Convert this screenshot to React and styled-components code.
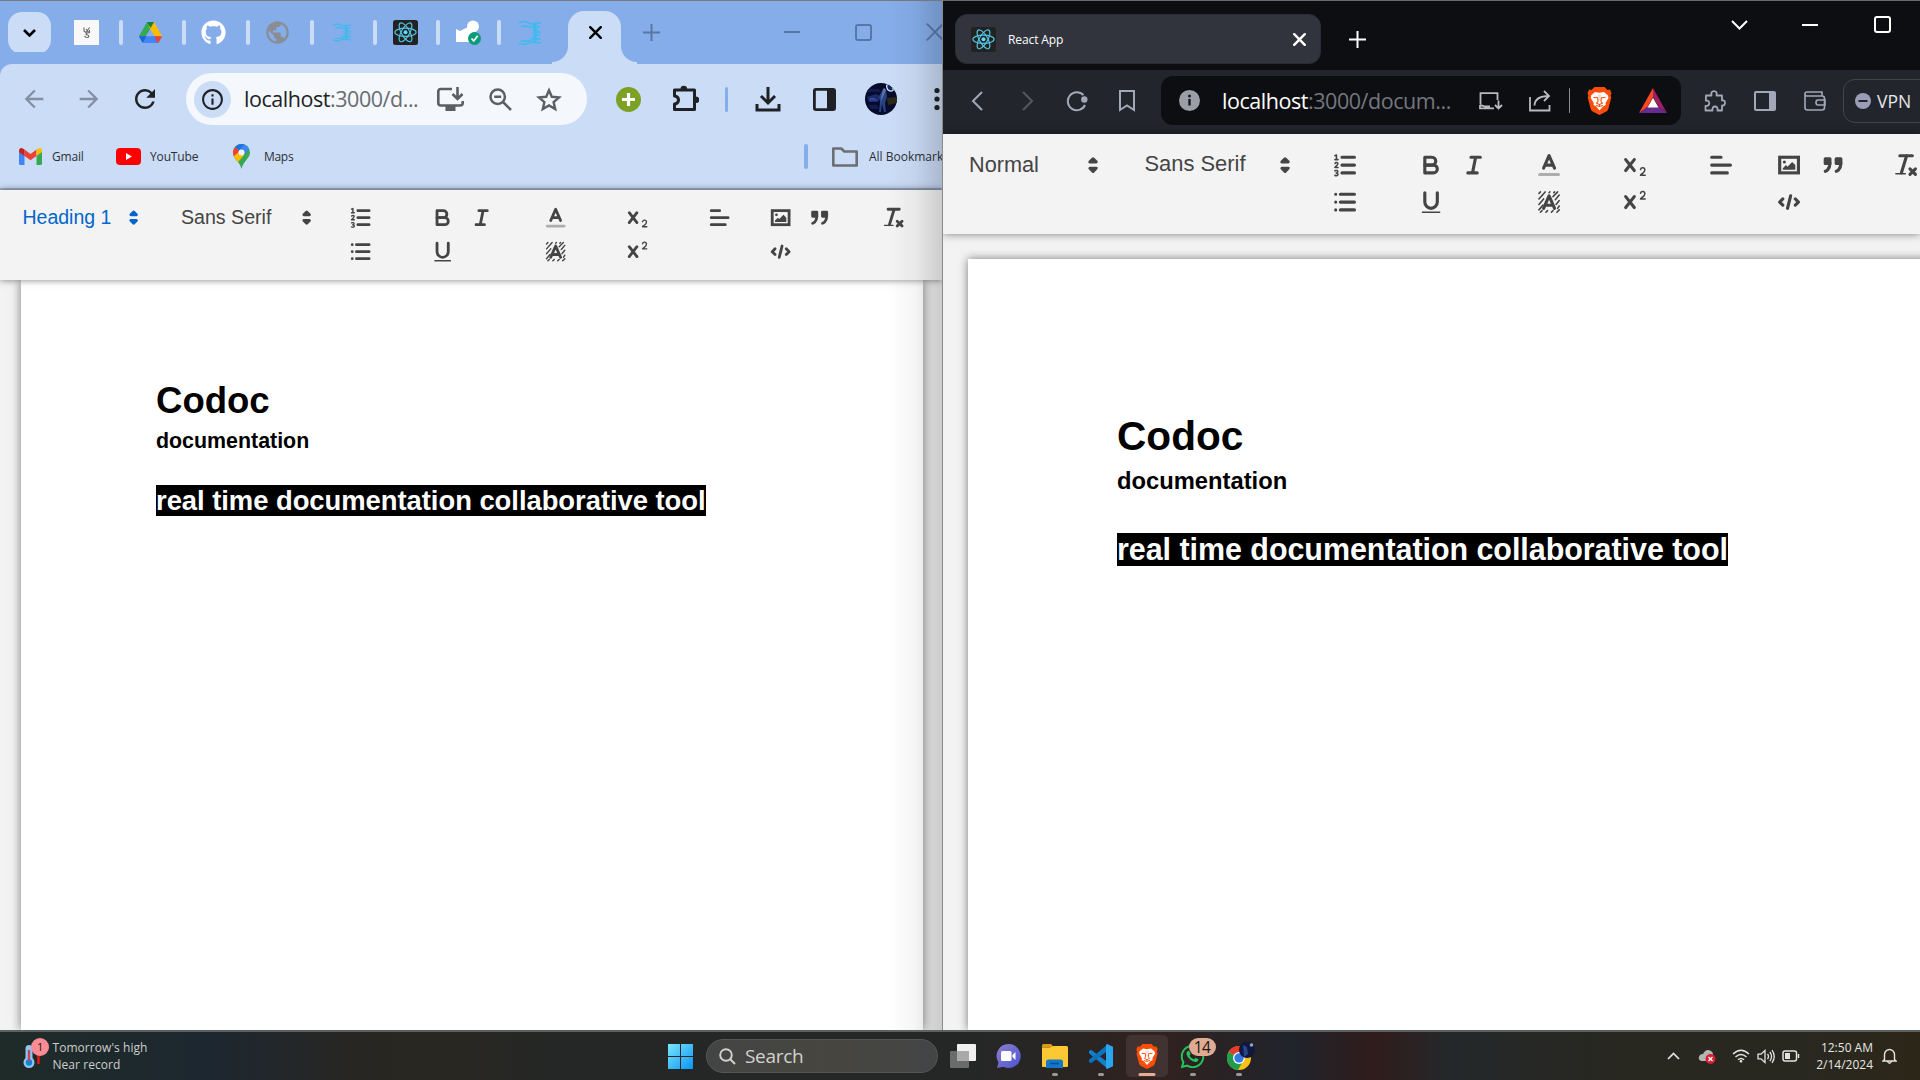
import React from "react";
import styled, { createGlobalStyle, css } from "styled-components";
import { FaGithub, FaWhatsapp } from "react-icons/fa";
import {
  MdArrowBack, MdArrowForward, MdRefresh, MdInfoOutline, MdPublic,
} from "react-icons/md";

const Global = createGlobalStyle`
  * { box-sizing: border-box; }
  body { margin: 0; overflow: hidden; background: #f3f3f3; }
  svg { display: block; flex: none; }
`;

const uiFont = `"Open Sans", "Noto Sans", sans-serif`;
const docFont = `"Liberation Sans", Arial, sans-serif`;

const Screen = styled.div`
  width: 1920px;
  height: 1080px;
  display: grid;
  grid-template: 1030px 50px / 943px 977px;
  overflow: hidden;
  font-family: ${uiFont};
`;

/* ---------- shared parts ---------- */
const Bar = styled.div`
  display: flex;
  align-items: ${(p) => p.$align || "center"};
  flex: none;
  height: ${(p) => p.$h}px;
`;
const Slot = styled.div`
  flex: none;
  display: flex;
  align-items: center;
  justify-content: center;
  width: ${(p) => p.$w}px;
  margin-left: ${(p) => p.$gap || 0}px;
  margin-top: ${(p) => p.$drop || 0}px;
  color: ${(p) => p.$color || "inherit"};
`;
const Divider = styled.span`
  flex: none;
  width: ${(p) => p.$w || 4}px;
  height: 25px;
  border-radius: 2px;
  margin-left: ${(p) => p.$gap}px;
  background: ${(p) => p.$color};
`;

/* ---------- light browser ---------- */
const LightWindow = styled.section`
  position: relative;
  display: flex;
  flex-direction: column;
  overflow: hidden;
  background: #f3f3f3;
  border-top: 1px solid #75787d;
  border-right: 1px solid #8b8b8b;
`;
const EdgeShade = styled.div`
  position: absolute;
  z-index: 4;
  inset: 0 0 0 auto;
  width: 54px;
  pointer-events: none;
  background: linear-gradient(90deg, transparent, rgba(0, 0, 0, 0.04) 50%, rgba(0, 0, 0, 0.16));
`;
const LightTabs = styled(Bar)`
  background: #85ade9;
`;
const TabSearch = styled.div`
  flex: none;
  display: grid;
  place-items: center;
  width: 43px;
  height: 42px;
  margin-left: 8px;
  border-radius: 14px;
  background: #cbdcf6;
`;
const ActiveTab = styled.div`
  flex: none;
  position: relative;
  align-self: flex-end;
  display: grid;
  place-items: center;
  width: 53px;
  height: 53px;
  padding: 0 0 10px 2px;
  margin-left: 26px;
  border-radius: 16px 16px 0 0;
  background: #cbdcf6;
  &::before, &::after {
    content: "";
    position: absolute;
    bottom: 0;
    width: 16px;
    height: 18px;
  }
  &::before { right: 100%; background: radial-gradient(circle at 0 0, transparent 15.5px, #cbdcf6 16.5px); }
  &::after { left: 100%; background: radial-gradient(circle at 100% 0, transparent 15.5px, #cbdcf6 16.5px); }
`;
const LightChrome = styled.div`
  flex: none;
  height: 126px;
  background: #cbdcf6;
  border-bottom: 2px solid #a3b2cb;
  border-top-left-radius: 12px;
  box-shadow: -12px -12px 0 0 #85ade9;
`;
const Omnibox = styled.div`
  flex: none;
  display: flex;
  align-items: center;
  width: 401px;
  height: 52px;
  margin-left: 26px;
  padding-left: 8px;
  border-radius: 26px;
  background: #f4f8fd;
  color: #5b5e63;
`;
const InfoChip = styled.div`
  flex: none;
  display: grid;
  place-items: center;
  width: 37px;
  height: 37px;
  border-radius: 50%;
  background: #cbdcf6;
  color: #1f2125;
`;
const Url = styled.div`
  flex: none;
  width: ${(p) => p.$w}px;
  margin-left: ${(p) => p.$gap}px;
  font-size: 21.5px;
  line-height: 30px;
  letter-spacing: ${(p) => p.$ls}px;
  white-space: nowrap;
  color: ${(p) => p.$dim};
  b { font-weight: 400; color: ${(p) => p.$host}; }
`;
const BookmarkText = styled.span`
  flex: none;
  width: ${(p) => p.$w}px;
  margin-left: ${(p) => p.$gap}px;
  font-size: 12px;
  line-height: 16px;
  letter-spacing: ${(p) => p.$ls || 0}px;
  color: #2c3035;
  white-space: nowrap;
`;

/* ---------- dark browser ---------- */
const DarkWindow = styled.section`
  display: flex;
  flex-direction: column;
  overflow: hidden;
  background: #f3f3f3;
  border-top: 1px solid #6b6d6c;
`;
const DarkTabs = styled(Bar)`
  background: #0d0e12;
  color: #fff;
`;
const DarkTab = styled.div`
  flex: none;
  display: flex;
  align-items: center;
  width: 366px;
  height: 50px;
  margin: 7px 0 0 12px;
  border-radius: 12px;
  background: #31343d;
  border: 1px solid #2a2d35;
  font-size: 12px;
`;
const TabTitle = styled.span`
  flex: none;
  width: 285px;
  margin-left: 12px;
  letter-spacing: -0.1px;
  color: #fff;
`;
const DarkTools = styled(Bar)`
  padding-bottom: 2px;
  background: #23252c;
  color: #a2a8b8;
`;
const DarkOmnibox = styled.div`
  flex: none;
  display: flex;
  align-items: center;
  width: 520px;
  height: 49px;
  margin: -1px 0 0 26px;
  border-radius: 12px;
  background: #0d0e12;
  color: #b9bbc0;
`;
const VpnButton = styled.div`
  flex: none;
  display: flex;
  align-items: center;
  width: 110px;
  height: 44px;
  margin-left: 17px;
  padding-left: 11px;
  gap: 6px;
  border: 1px solid #41454f;
  border-radius: 12px;
  color: #e6e7ea;
  font-size: 17.5px;
`;

/* ---------- editor ---------- */
const EditorToolbar = styled.div`
  position: relative;
  z-index: 2;
  flex: none;
  display: flex;
  height: ${(p) => p.$h}px;
  padding-top: ${(p) => p.$pt}px;
  background: #f3f3f3;
  color: #444;
  box-shadow: 0 0 ${(p) => p.$blur}px rgba(0, 0, 0, 0.5);
`;
const Picker = styled.div`
  flex: none;
  display: flex;
  align-items: center;
  justify-content: space-between;
  width: ${(p) => p.$w}px;
  height: ${(p) => p.$row}px;
  margin-left: ${(p) => p.$gap}px;
  font: ${(p) => p.$size}px/1 ${docFont};
  white-space: nowrap;
  color: ${(p) => (p.$active ? "#06c" : "#444")};
`;
const PickerLabel = styled.span`
  padding-bottom: ${(p) => p.$lift || 0}px;
`;
const ToolGroup = styled.div`
  flex: none;
  display: grid;
  grid-template-columns: repeat(${(p) => p.$cols || 1}, ${(p) => p.$cell}px);
  grid-auto-rows: ${(p) => p.$row}px;
  place-items: center;
  align-content: start;
  margin-left: ${(p) => p.$gap}px;
`;
const PageArea = styled.div`
  flex: 1;
  min-height: 0;
  display: flex;
  padding: ${(p) => p.$pad};
`;
const Page = styled.article`
  flex: none;
  width: ${(p) => p.$w}px;
  padding: ${(p) => p.$pad};
  background: #fff;
  box-shadow: 0 0 ${(p) => p.$blur}px rgba(0, 0, 0, 0.5);
  font-family: ${docFont};
  color: #000;
`;
const heading = css`
  margin: 0;
  font-weight: 700;
  white-space: nowrap;
`;
const Title = styled.h1`
  ${heading}
  font-size: ${(p) => 26 * p.$s}px;
  line-height: ${(p) => p.$lh}px;
`;
const Subtitle = styled.h3`
  ${heading}
  font-size: ${(p) => 15.21 * p.$s}px;
  line-height: 1.42;
`;
const Marked = styled.h2`
  ${heading}
  display: flex;
  align-items: center;
  width: ${(p) => p.$w}px;
  height: ${(p) => p.$h}px;
  margin-top: ${(p) => p.$gap}px;
  font-size: ${(p) => 19.5 * p.$s}px;
  letter-spacing: -0.04px;
  background: #000;
  color: #fff;
`;

/* ---------- taskbar ---------- */
const Taskbar = styled.footer`
  grid-column: 1 / -1;
  display: flex;
  align-items: center;
  border-top: 2px solid #5d6160;
  background: linear-gradient(90deg, #1f2b28 0, #1d2730 210px, #282622 360px, #292722 450px, #242726 560px, #252726 980px, #2a2422 1090px, #32211e 1150px, #20242b 1290px, #301c1c 1375px, #24282a 1450px, #282720 1620px, #292820 1800px, #2c2618 1920px);
  color: #d6d6d4;
`;
const TaskText = styled.div`
  flex: none;
  width: ${(p) => p.$w}px;
  margin-left: ${(p) => p.$gap}px;
  font-size: 12px;
  line-height: 17px;
  letter-spacing: ${(p) => p.$ls || 0}px;
  text-align: ${(p) => p.$align || "left"};
  white-space: nowrap;
  color: ${(p) => p.$color || "#cdcecc"};
`;
const SearchBox = styled.div`
  flex: none;
  display: flex;
  align-items: center;
  width: 232px;
  height: 34px;
  margin-left: 13px;
  padding-left: 12px;
  gap: 9px;
  border-radius: 17px;
  background: linear-gradient(90deg, #434545, #47463f 50%, #434446);
  border: 1px solid #555755;
  font-size: 19px;
  letter-spacing: -0.3px;
  color: #d2d2d0;
`;
const AppButton = styled.div`
  position: relative;
  flex: none;
  display: grid;
  place-items: center;
  width: 42px;
  height: 42px;
  margin-left: ${(p) => p.$gap || 4}px;
  border-radius: 5px;
  background: ${(p) => (p.$active ? "rgba(255,255,255,.08)" : "transparent")};
  &::after {
    content: "";
    position: absolute;
    bottom: 1px;
    left: 50%;
    transform: translateX(-50%);
    height: 3px;
    border-radius: 2px;
    width: ${(p) => (p.$active ? 17 : p.$open ? 6 : 0)}px;
    background: ${(p) => (p.$active ? "#e5ad96" : "#9a9a98")};
  }
`;
const Badge = styled.span`
  position: absolute;
  z-index: 1;
  left: ${(p) => p.$x}px;
  top: ${(p) => p.$y}px;
  min-width: ${(p) => p.$w}px;
  height: 18px;
  border-radius: 9px;
  background: ${(p) => p.$bg};
  color: #1c1512;
  font-size: ${(p) => p.$size}px;
  line-height: 18px;
  letter-spacing: -0.5px;
  text-align: center;
`;
const Weather = styled.div`
  position: relative;
  flex: none;
  width: 30px;
  margin-left: 20px;
`;

/* ---------- drawings ---------- */
const Ico = ({ w, h, vb, children, sw = 2, fill = "none", ...rest }) => (
  <svg width={w} height={h || w} viewBox={vb || `0 0 ${w} ${h || w}`} fill={fill} stroke="currentColor" strokeWidth={sw} {...rest}>
    {children}
  </svg>
);
const Close = ({ size = 13, sw = 2.4 }) => (
  <Ico w={size} sw={sw} strokeLinecap="round"><path d={`M1.2 1.2L${size - 1.2} ${size - 1.2}M${size - 1.2} 1.2L1.2 ${size - 1.2}`} /></Ico>
);
const Plus = ({ sw = 2 }) => <Ico w={17} sw={sw}><path d="M8.5 0v17M0 8.5h17" /></Ico>;
const Dash = () => <Ico w={16} h={16}><path d="M0 8h16" /></Ico>;
const Square = () => <Ico w={17}><rect x="1" y="1" width="15" height="15" rx="2" /></Ico>;
const InstallIcon = () => (
  <Ico w={27} h={24} sw={2.6}>
    <path d="M15 2H4Q1.300 2 1.300 4.500v11.500Q1.300 18.500 4 18.500h19q2.700 0 2.700-2.500v-2" />
    <path d="M20.500 0v11M15.500 7l5 5 5-5" />
    <path d="M8.500 19h10v5h-10z" fill="currentColor" stroke="none" />
  </Ico>
);
const ZoomOutIcon = () => (
  <Ico w={23} h={23} sw={2.5}><circle cx="8.700" cy="8.700" r="7.200" /><path d="M14 14l8 8M5.200 8.700h7" /></Ico>
);
const StarIcon = () => (
  <Ico w={26} h={25} sw={2.4}><path d="M13 3.200l2.800 6.600 7.200.6-5.400 4.700 1.600 7-6.200-3.700-6.200 3.700 1.600-7L3 10.400l7.200-.6z" /></Ico>
);
const ReactLogo = () => (
  <svg width="25" height="25" viewBox="0 0 25 25" fill="none" stroke="#53c1de" strokeWidth="1.2">
    <rect width="25" height="25" rx="2.5" fill="#222" stroke="none" />
    {[0, 60, 120].map((a) => <ellipse key={a} cx="12.5" cy="12.3" rx="10.6" ry="4.1" transform={`rotate(${a} 12.5 12.3)`} />)}
    <circle cx="12.5" cy="12.3" r="2" fill="#61dafb" stroke="none" />
  </svg>
);
const Drive = () => (
  <svg width="23" height="21" viewBox="0 0 23 21">
    <path d="M8 0l3.700 6L4 18.500 0 14.200z" fill="#34a853" />
    <path d="M15 0l8 14.200h-7.400L9.800 4.500 11.500 2z" fill="#fbbc04" />
    <path d="M8 0h7l-3.400 6z" fill="#188038" />
    <path d="M0 14.200h17L19 21H5q-1.500 0-2-1z" fill="#4285f4" />
    <path d="M15.600 14.200H23L20 20q-.6 1-1.400.9z" fill="#ea4335" />
    <path d="M0 14.200h7.400L4 20.500q-.8-.2-1.200-1z" fill="#1967d2" />
  </svg>
);
const Sketch = () => (
  <svg width="25" height="25" viewBox="0 0 25 25" fill="none" stroke="#666" strokeWidth="1.100">
    <rect width="25" height="25" fill="#f8f8f8" stroke="none" />
    <path d="M10 7.500v3.500l2 1.500 3.500-5M12 9l2.500 3M15.500 10v2.500l-2.500.5q-2 1.500.5 2 2.500.8.500 2.500l-2-.2-1.500-1.300" />
  </svg>
);
const Helix = ({ big }) => (
  <svg width={big ? 24 : 20} height={big ? 26 : 19} viewBox="0 0 24 26" preserveAspectRatio="none" fill="none" stroke="#35bdf0" strokeWidth={big ? 1.4 : 1.6} opacity={big ? 0.95 : 0.85}>
    <path d="M1 3C7-1 10 3 13 4l10-1M4 6c5 0 8 1 10 1h8M15 10h5M16 12h7M15 15h7M13 18c3 1 5 1 10 1M1 23c6 4 9-1 13-1l9 1M3 21c6 1 8-1 11-1" />
    <path d="M17 4v18" strokeWidth="3" /><path d="M12 10h.5M13 13h.5M11 16h.5" strokeWidth="2" />
  </svg>
);
const KeyCheck = () => (
  <svg width="25" height="25" viewBox="0 0 25 25">
    <circle cx="17" cy="6.500" r="6" fill="#fff" />
    <path d="M0 9l4 2 8-4 5 6-2 9H0z" fill="#fff" />
    <circle cx="18.500" cy="18.500" r="6.500" fill="#0b9b79" />
    <path d="M15.500 18.500l2.200 2.500 4-5.200" fill="none" stroke="#fff" strokeWidth="1.700" />
  </svg>
);
const Gmail = () => (
  <svg width="23" height="17" viewBox="0 0 23 17">
    <path d="M0 3l5.500 4v10H1.500Q0 17 0 15.500z" fill="#4285f4" />
    <path d="M17.500 7L23 3v12.500q0 1.500-1.500 1.500h-4z" fill="#34a853" />
    <path d="M5.500 1.500L11.500 6l6-4.500V8l-6 4.300L5.500 8z" fill="#ea4335" />
    <path d="M0 3Q0 0 2.400 0q1.300 0 3.100 1.500V8L0 4z" fill="#c5221f" />
    <path d="M23 3q0-3-2.400-3-1.300 0-3.100 1.500V8L23 4z" fill="#fbbc04" />
  </svg>
);
const YouTube = () => (
  <svg width="25" height="17" viewBox="0 0 25 17"><rect width="25" height="17" rx="4" fill="#f00" /><path d="M10 5l6 3.500-6 3.500z" fill="#fff" /></svg>
);
const Maps = () => (
  <svg width="17" height="25" viewBox="0 0 17 25">
    <path d="M8.500 0A8.500 8.500 0 0 1 17 8.500c0 6-6.500 8-8.500 16.500C6.500 16.500 0 14.500 0 8.500A8.500 8.500 0 0 1 8.500 0z" fill="#34a853" />
    <path d="M2 3Q4.500 0 8.500 0q1.500 0 3 .6L6 7.500z" fill="#1a73e8" />
    <path d="M11.500.6Q15 2 16.300 5.200L4.200 17.200Q1.700 15 .8 12z" fill="#4285f4" />
    <path d="M.8 12L6 6l5 5.200-6.200 7Q2 15.500.8 12z" fill="#fbbc04" />
    <path d="M2 3l5 4-6.200 5Q0 10.500 0 8.500 0 5 2 3z" fill="#ea4335" />
    <circle cx="8.500" cy="8.500" r="3" fill="#f1f3f4" />
  </svg>
);
const Avatar = () => (
  <svg width="32" height="32" viewBox="0 0 32 32">
    <defs><clipPath id="av"><circle cx="16" cy="16" r="16" /></clipPath></defs>
    <g clipPath="url(#av)">
      <rect width="32" height="32" fill="#070b2b" />
      <path d="M2 14l9-3 5 3-3 5H4z" fill="#1b2a6b" />
      <path d="M0 6h14l2 3H2zM3 22h9l2 4H6z" fill="#101a4e" />
      <path d="M22 15l10-1v6l-9 2z" fill="#2d2817" />
      <path d="M17 8l2-3 2 2 1 7-2 6 1 9h-2l-2-8-1 8h-2l1-10-1-6z" fill="#27407f" />
      <path d="M18 6l1.500-1L21 7l-2 5-3 6-1 7 1-10z" fill="#6d86bd" opacity=".7" />
      <path d="M21.500 3q1-2.500 4-1.500 3 2 2.500 6-3 1.500-5.500-1z" fill="#0d2a66" stroke="#dfeafb" strokeWidth="1.200" />
      <path d="M4 17h8M5 15.500h5" stroke="#4660b0" strokeWidth=".8" />
    </g>
  </svg>
);
const BraveLogo = ({ w, h }) => (
  <svg width={w} height={h} viewBox="0 0 24 28">
    <path d="M7 0h10l3 3 2.300-.4L24 6l-.9 2.500.7 2-3 11.500q-.5 1.500-2 2.500L12 28l-6.800-3.500q-1.500-1-2-2.500L.2 10.500l.7-2L0 6l1.700-3.400L4 3z" fill="#fb4d0a" />
    <path d="M7.500 5l4.500.8L16.500 5 20.500 8.500l.5 2.500-3 5 .3 2-2.500 1.300L12 23.500l-3.500-4.200L6 18l.3-2-3-5L3.500 8.500z" fill="#fff" />
    <path d="M6 10.500l4.200.3.300 3.700-1.500 1.500 3 1.600 3-1.600-1.500-1.500.3-3.700 4.200-.3M12 17.600v1.800M8.500 18.500l3.500 1 3.500-1" fill="none" stroke="#fb4d0a" strokeWidth="1.050" />
    <path d="M9.500 7.500h5l-1.500 3v3h-2v-3z" fill="#fb4d0a" opacity=".18" />
  </svg>
);
const BatLogo = () => (
  <svg width="28" height="25" viewBox="0 0 28 25">
    <path d="M14 0v9L8.500 19 0 25z" fill="#ff4724" />
    <path d="M14 0l14 25-8.500-6L14 9z" fill="#9e1f63" />
    <path d="M0 25l8.500-6h11L28 25z" fill="#662d91" />
    <path d="M14 9.800L19.500 19.500h-11z" fill="#fff" />
  </svg>
);

/* toolbar glyphs on an 18-unit grid */
const G = ({ s, children }) => (
  <svg width={18 * s} height={18 * s} viewBox="0 0 18 18" fill="none" stroke="currentColor" strokeWidth="2" strokeLinecap="round" strokeLinejoin="round">
    {children}
  </svg>
);
const f = { fill: "currentColor", stroke: "none" };
const Caret = ({ s }) => <G s={s}><polygon points="7 11 9 13 11 11" fill="currentColor" /><polygon points="7 7 9 5 11 7" fill="currentColor" /></G>;
const subTwo = "M15.500,15H13.861a3.858,3.858,0,0,0,1.914-2.975,1.800,1.800,0,0,0-1.600-1.751A1.921,1.921,0,0,0,12.021,11.700a.50013.50013,0,1,0,.957.291h0a.914.914,0,0,1,1.053-.725.81.81,0,0,1,.744.762c0,1.076-1.16971,1.86982-1.93971,2.43082A1.45639,1.45639,0,0,0,12,15.500a.5.5,0,0,0,.5.500h3A.5.5,0,0,0,15.500,15Z";
const glyphs = {
  ordered: <>
    <path d="M7 4h8M7 9h8M7 14h8" />
    <path strokeWidth="1" d="M2.500 5.500h2M3.500 5.500v-3l-1 .5M2.500 10.500h2M2.600 7.900q.9-.9 1.700-.2.400.8-1.800 2.700M2.500 12.700q1.900-.6 1.800.6-.1.800-1 .8 1.200.1 1.200.9-.2 1.100-2 .6" />
  </>,
  bullet: <path d="M6 4h9M6 9h9M6 14h9M3 4h0M3 9h0M3 14h0" />,
  bold: <><path d="M5,4H9.500A2.500,2.500,0,0,1,12,6.500v0A2.500,2.500,0,0,1,9.500,9H5A0,0,0,0,1,5,9V4A0,0,0,0,1,5,4Z" /><path d="M5,9h5.500A2.500,2.500,0,0,1,13,11.500v0A2.500,2.500,0,0,1,10.500,14H5a0,0,0,0,1,0,0V9A0,0,0,0,1,5,9Z" /></>,
  italic: <path d="M7 4h6M5 14h6M8 14l2-10" />,
  underline: <><path d="M5,3V9a4.012,4.012,0,0,0,4,4H9a4.012,4.012,0,0,0,4-4V3" /><rect {...f} height="1" rx=".5" width="12" x="3" y="15" /></>,
  color: <><path d="M3 15h12" opacity=".4" /><path d="M5.500 11L9 3l3.500 8M11.630 9H6.380" /></>,
  background: <>
    <path strokeWidth="1" d="M2.500 3.500l1-1M2.500 7l4-4.500M2.500 10.500l3-3.500M2.500 14l2.500-3M9 3l.5-.5M12 3l.5-.5M11.500 5.500l3-3M13 7.500l2.500-3M13.500 10.500l2-2.500M14.500 13l1-1.500M3.500 15.500l1-1M7 15.500l1-1M10.500 15.500l1-1M14 15.500l1.500-1.500" />
    <path d="M5.500 13L9 5l3.500 8M11.630 11H6.380" />
  </>,
  sub: <><path {...f} d={subTwo} /><path d="M3 5.500l5.500 7M8.500 5.500L3 12.500" /></>,
  sup: <><path {...f} transform="translate(0 -8.500)" d={subTwo} /><path d="M3 5.500l5.500 7M8.500 5.500L3 12.500" /></>,
  align: <path d="M3 9h12M3 14h10M3 4h6" />,
  image: <><rect x="3" y="4" width="12" height="10" strokeLinejoin="miter" /><circle {...f} cx="6" cy="7" r="1" /><polyline {...f} points="5 12 5 11 7 9 8 10 11 7 13 9 13 12 5 12" /></>,
  quote: <><rect fill="currentColor" x="4" y="5" width="3" height="3" /><rect fill="currentColor" x="11" y="5" width="3" height="3" /><path fillRule="evenodd" d="M7,8c0,4.031-3,5-3,5M14,8c0,4.031-3,5-3,5" /></>,
  code: <path d="M5 7L3 9l2 2M13 7l2 2-2 2M10 5L8 13" />,
  clean: <><path d="M5 3h8M6 14L9.350 3M11.500 11.500l3.500 3.500M15 11.500L11.500 15" /><rect {...f} height="1" rx=".5" width="7" x="2" y="14" /></>,
};
const groups = [
  { id: "list", cols: 1, items: ["ordered", "bullet"] },
  { id: "style", cols: 2, items: ["bold", "italic", "underline"] },
  { id: "color", cols: 1, items: ["color", "background"] },
  { id: "script", cols: 1, items: ["sub", "sup"] },
  { id: "align", cols: 1, items: ["align"] },
  { id: "embed", cols: 2, items: ["image", "quote", "code"] },
  { id: "clean", cols: 1, items: ["clean"] },
];
const Tools = ({ s, row, cell, gaps }) =>
  groups.map((g, i) => (
    <ToolGroup key={g.id} $cols={g.cols} $row={row} $cell={cell} $gap={gaps[i]}>
      {g.items.map((k) => <G key={k} s={s}>{glyphs[k]}</G>)}
    </ToolGroup>
  ));

const LEFT = 1.40625;
const RIGHT = 1.5625;

function LightBrowser() {
  const sep = "#cbdcf6";
  return (
    <LightWindow>
      <EdgeShade />
      <LightTabs $h={63}>
        <TabSearch><Ico w={13} h={8} sw={2.6}><path d="M1 1l5.500 5.500L12 1" /></Ico></TabSearch>
        <Slot $w={25} $gap={23}><Sketch /></Slot>
        <Divider $gap={20} $color={sep} />
        <Slot $w={23} $gap={16}><Drive /></Slot>
        <Divider $gap={20} $color={sep} />
        <Slot $w={25} $gap={15} $color="#fff"><FaGithub size={25} /></Slot>
        <Divider $gap={20} $color={sep} />
        <Slot $w={27} $gap={14} $color="#8a8e94"><MdPublic size={27} /></Slot>
        <Divider $gap={19} $color={sep} />
        <Slot $w={22} $gap={17}><Helix /></Slot>
        <Divider $gap={20} $color={sep} />
        <Slot $w={25} $gap={16}><ReactLogo /></Slot>
        <Divider $gap={18} $color={sep} />
        <Slot $w={25} $gap={16}><KeyCheck /></Slot>
        <Divider $gap={16} $color={sep} />
        <Slot $w={24} $gap={17}><Helix big /></Slot>
        <ActiveTab><Close /></ActiveTab>
        <Slot $w={17} $gap={22} $color="#5a76a5"><Plus /></Slot>
        <Slot $w={16} $gap={124} $drop={-1} $color="#5a76a5"><Dash /></Slot>
        <Slot $w={17} $gap={55} $drop={-1} $color="#5a76a5"><Square /></Slot>
        <Slot $w={17} $gap={54} $drop={-1} $color="#5a76a5"><Close size={18} sw={1.8} /></Slot>
      </LightTabs>
      <LightChrome>
        <Bar $h={70}>
          <Slot $w={26} $gap={21} $color="#858fa3"><MdArrowBack size={28} /></Slot>
          <Slot $w={26} $gap={29} $color="#858fa3"><MdArrowForward size={28} /></Slot>
          <Slot $w={30} $gap={28} $color="#1f2125"><MdRefresh size={30} /></Slot>
          <Omnibox>
            <InfoChip><MdInfoOutline size={25} /></InfoChip>
            <Url $w={178} $gap={13} $ls={-0.45} $dim="#686b70" $host="#202226"><b>localhost</b>:3000/d...</Url>
            <Slot $w={28} $gap={14}><InstallIcon /></Slot>
            <Slot $w={28} $gap={22}><ZoomOutIcon /></Slot>
            <Slot $w={30} $gap={20}><StarIcon /></Slot>
          </Omnibox>
          <Slot $w={25} $gap={29}>
            <svg width="25" height="25" viewBox="0 0 25 25"><circle cx="12.500" cy="12.500" r="12.500" fill="#7ca125" /><path d="M12.500 6v13M6 12.500h13" stroke="#fff" strokeWidth="3.200" /></svg>
          </Slot>
          <Slot $w={27} $gap={31} $drop={-2} $color="#1f2125">
            <Ico w={27} h={27} sw={3} strokeLinejoin="round">
              <path d="M2.500 5h20v19.500h-20v-5.500q4-.5 4-4t-4-4z" />
              <path d="M8.500 4a3.300 3.300 0 0 1 6.600 0zM24 11.500a3.300 3.300 0 0 1 0 6.600z" fill="currentColor" stroke="none" />
            </Ico>
          </Slot>
          <Divider $gap={26} $w={3} $color="#85ade9" />
          <Slot $w={26} $gap={27} $color="#1f2125"><Ico w={26} sw={3}><path d="M13 1v15M6 10l7 7 7-7M2 18v6h22v-6" /></Ico></Slot>
          <Slot $w={23} $gap={32} $color="#1f2125"><Ico w={23} sw={2.800}><rect x="1.400" y="1.400" width="20.200" height="20.200" rx="1.500" /><path d="M14 2h7v19h-7z" fill="currentColor" stroke="none" /></Ico></Slot>
          <Slot $w={32} $gap={29}><Avatar /></Slot>
          <Slot $w={6} $gap={36.500} $color="#1f2125"><Ico w={6} h={24} fill="currentColor" sw={0}><circle cx="3" cy="3.500" r="2.600" /><circle cx="3" cy="12" r="2.600" /><circle cx="3" cy="20.500" r="2.600" /></Ico></Slot>
        </Bar>
        <Bar $h={45}>
          <Slot $w={23} $gap={19}><Gmail /></Slot>
          <BookmarkText $w={34} $gap={10} $ls={-0.2}>Gmail</BookmarkText>
          <Slot $w={25} $gap={30}><YouTube /></Slot>
          <BookmarkText $w={50} $gap={9} $ls={-0.15}>YouTube</BookmarkText>
          <Slot $w={17} $gap={33}><Maps /></Slot>
          <BookmarkText $w={32} $gap={14} $ls={-0.3}>Maps</BookmarkText>
          <Divider $gap={508} $color="#85ade9" />
          <Slot $w={26} $gap={24} $color="#6b6e73"><Ico w={26} h={20} sw={2.600} strokeLinejoin="round"><path d="M1.300 1.500h8l3 3h12.400v14H1.300z" /></Ico></Slot>
          <BookmarkText $w={90} $gap={11}>All Bookmarks</BookmarkText>
        </Bar>
      </LightChrome>
      <EditorToolbar $h={90} $pt={11} $blur={7}>
        <Picker $active $w={123.500} $row={34} $gap={22.500} $size={19.500}>Heading 1<Caret s={LEFT} /></Picker>
        <Picker $w={138} $row={34} $gap={35} $size={19.600}>Sans Serif<Caret s={LEFT} /></Picker>
        <Tools s={LEFT} row={34} cell={39.400} gaps={[22.300, 41.900, 35, 42.200, 42.600, 21.700, 34.400]} />
      </EditorToolbar>
      <PageArea $pad="0 0 0 21px">
        <Page $w={902} $pad="95px 0 0 135px" $blur={10}>
          <Title $s={LEFT} $lh={51}>Codoc</Title>
          <Subtitle $s={LEFT}>documentation</Subtitle>
          <Marked $s={LEFT} $w={550} $h={31} $gap={29}>real time documentation collaborative tool</Marked>
        </Page>
      </PageArea>
    </LightWindow>
  );
}

function DarkBrowser() {
  return (
    <DarkWindow>
      <DarkTabs $h={69}>
        <DarkTab>
          <Slot $w={25} $gap={15}><ReactLogo /></Slot>
          <TabTitle>React App</TabTitle>
          <Close />
        </DarkTab>
        <Slot $w={17} $gap={28} $drop={7}><Plus /></Slot>
        <Slot $w={17} $gap={365} $drop={-22}><Ico w={17} h={10}><path d="M1 1l7.500 7.500L16 1" /></Ico></Slot>
        <Slot $w={16} $gap={54} $drop={-22}><Dash /></Slot>
        <Slot $w={17} $gap={56} $drop={-22}><Square /></Slot>
      </DarkTabs>
      <DarkTools $h={64}>
        <Slot $w={12} $gap={28}><Ico w={12} h={20}><path d="M11 1l-9 9 9 9" /></Ico></Slot>
        <Slot $w={12} $gap={39} $color="#545863"><Ico w={12} h={20}><path d="M1 1l9 9-9 9" /></Ico></Slot>
        <Slot $w={22} $gap={32}><Ico w={22} h={21}><path d="M17.500 4.200A9 9 0 1 0 19 14" /><circle cx="18.300" cy="8.500" r="3.200" fill="currentColor" stroke="none" /></Ico></Slot>
        <Slot $w={16} $gap={31}><Ico w={16} h={22}><path d="M1 1h14v19l-7-4.500L1 20z" /></Ico></Slot>
        <DarkOmnibox>
          <Slot $w={21} $gap={18}>
            <svg width="21" height="21" viewBox="0 0 21 21"><circle cx="10.500" cy="10.500" r="10.500" fill="#9b9ea6" /><path d="M10.500 9v6.500" stroke="#17191e" strokeWidth="2.400" /><circle cx="10.500" cy="6" r="1.500" fill="#17191e" /></svg>
          </Slot>
          <Url $w={233} $gap={22} $ls={-0.45} $dim="#74777e" $host="#fff"><b>localhost</b>:3000/docum...</Url>
          <Slot $w={24} $gap={24}><Ico w={24} h={18} sw={1.800}><path d="M1.500 12V1.200h17V8M1 12.800l5 1.700h5M1 12.800v3.500h14M19.500 8.500v7M16 13l3.500 3.500L23 13" /></Ico></Slot>
          <Slot $w={22} $gap={26}><Ico w={22} h={22} sw={1.800}><path d="M1 7v13.500h19.500V15M5.500 15.500Q6 6 20 6M15 1l5 5-5 5" /></Ico></Slot>
          <Divider $w={1} $gap={18} $color="#8a8c90" />
          <Slot $w={25} $gap={17}><BraveLogo w={25} h={28} /></Slot>
          <Slot $w={28} $gap={27}><BatLogo /></Slot>
        </DarkOmnibox>
        <Slot $w={22} $gap={23}>
          <Ico w={22} h={22} sw={1.800} strokeLinejoin="round"><path d="M2 5.500h5.500Q6.500 1.200 10 1.200T12.500 5.500H18v5q3-.8 3 2.300T18 15.500V20.500h-4.500q.5-4-2.500-4t-2.500 4H1.500V16q3.800 0 3.800-2.800T1.800 10.500z" /></Ico>
        </Slot>
        <Slot $w={22} $gap={28}><Ico w={22} h={20}><rect x="1" y="1" width="20" height="18" rx="1" /><path d="M15 1h6v18h-6z" fill="currentColor" stroke="none" /></Ico></Slot>
        <Slot $w={22} $gap={28}><Ico w={22} h={20} sw={1.600}><path d="M1 3.500v13q0 2.500 2.500 2.500H18q2.500 0 2.500-2.500V7.500Q20.500 5 18 5H3Q1 5 1 3t2-2h15v4M21 9h-7q-2 0-2 2.500t2 2.500h7z" /></Ico></Slot>
        <VpnButton>
          <svg width="16" height="16" viewBox="0 0 16 16"><circle cx="8" cy="8" r="8" fill="#9a9cb8" /><path d="M3.500 8h9" stroke="#23252c" strokeWidth="2" /></svg>
          VPN
        </VpnButton>
      </DarkTools>
      <EditorToolbar $h={100} $pt={13} $blur={8}>
        <Picker $w={138} $row={36} $gap={26} $size={21.700}><PickerLabel $lift={1}>Normal</PickerLabel><Caret s={RIGHT} /></Picker>
        <Picker $w={154.500} $row={36} $gap={37.500} $size={21.900}><PickerLabel $lift={2}>Sans Serif</PickerLabel><Caret s={RIGHT} /></Picker>
        <Tools s={RIGHT} row={37} cell={43.750} gaps={[24, 42, 30.500, 42.700, 42.700, 23.700, 30]} />
      </EditorToolbar>
      <PageArea $pad="25px 0 0 25px">
        <Page $w={1000} $pad="150px 0 0 149px" $blur={9}>
          <Title $s={RIGHT} $lh={55.2}>Codoc</Title>
          <Subtitle $s={RIGHT}>documentation</Subtitle>
          <Marked $s={RIGHT} $w={611} $h={33} $gap={35}>real time documentation collaborative tool</Marked>
        </Page>
      </PageArea>
    </DarkWindow>
  );
}

function SystemTaskbar() {
  return (
    <Taskbar>
      <Weather>
        <svg width="22" height="26" viewBox="0 0 22 26">
          <rect x="5.500" y="2" width="7" height="18" rx="3.500" fill="#8ec6f0" /><circle cx="9" cy="19.500" r="5.500" fill="#8ec6f0" />
          <circle cx="9" cy="19.500" r="3.200" fill="#1583d6" /><path d="M9 7v11" stroke="#c9425d" strokeWidth="2.400" />
          <path d="M18.500 12v9" stroke="#e1190f" strokeWidth="2.600" />
        </svg>
        <Badge $x={11} $y={-5} $w={18} $bg="#fb8c95" $size={11}>1</Badge>
      </Weather>
      <TaskText $w={110} $gap={2.500} $ls={0.05}>Tomorrow's high<br />Near record</TaskText>
      <Slot $w={25} $gap={505.500}>
        <svg width="25" height="25" viewBox="0 0 25 25">
          <defs><linearGradient id="win" x2="1" y2="1"><stop stopColor="#7be6fb" /><stop offset="1" stopColor="#0a94f5" /></linearGradient></defs>
          <path d="M0 0h12v12H0zM13 0h12v12H13zM0 13h12v12H0zM13 13h12v12H13z" fill="url(#win)" />
        </svg>
      </Slot>
      <SearchBox><Ico w={17} h={17} sw={1.900}><circle cx="7" cy="7" r="5.800" /><path d="M11 11l5 5" /></Ico>Search</SearchBox>
      <AppButton $gap={4}>
        <svg width="26" height="24" viewBox="0 0 26 24"><rect y="7" width="19" height="17" rx="1" fill="#6b6b6b" /><rect x="7" width="19" height="17" rx="1" fill="#f0f0f0" /><path d="M7 7h12v10H7z" fill="#a9a9a9" /></svg>
      </AppButton>
      <AppButton $gap={3.500}>
        <svg width="25" height="24" viewBox="0 0 25 24">
          <defs><linearGradient id="chat" x2="1" y2="1"><stop stopColor="#8e7fd0" /><stop offset="1" stopColor="#4a55cf" /></linearGradient></defs>
          <path d="M12.500 0a12 12 0 1 1-5 22.800L1 24l1.500-5.500A12 12 0 0 1 12.500 0z" fill="url(#chat)" />
          <rect x="5" y="7" width="10.500" height="10" rx="1.500" fill="#fff" /><path d="M16.500 11l3-3v8l-3-3z" fill="#fff" />
        </svg>
      </AppButton>
      <AppButton $open>
        <svg width="26" height="24" viewBox="0 0 26 24">
          <path d="M0 1.500Q0 0 1.500 0H9l3 3.500H0z" fill="#dc9a12" /><path d="M0 3.500h8l3-1.500h13.500Q26 2 26 3.500V22q0 1-1 1H1q-1 0-1-1z" fill="#fcc934" />
          <path d="M4 24v-6q0-2.500 2.500-2.500h12Q21 15.500 21 18v6z" fill="#1477c9" /><path d="M8 19.500h9" stroke="#0a4f94" strokeWidth="1.500" />
        </svg>
      </AppButton>
      <AppButton $open>
        <svg width="26" height="25" viewBox="0 0 26 25">
          <path d="M1 7l2-1.200L20 18.500V25L1 9.200z" fill="#1480cb" /><path d="M1 18l2 1.200L20 6.500V0L1 15.800z" fill="#0b72bb" /><path d="M19 0l6 2.700v19.600L19 25l-1-1V1z" fill="#2aa5ef" />
        </svg>
      </AppButton>
      <AppButton $active><BraveLogo w={22} h={25} /></AppButton>
      <AppButton $open>
        <FaWhatsapp size={27} color="#25c45c" />
        <Badge $x={17} $y={3} $w={27} $bg="#e0ab93" $size={15.500}>14</Badge>
      </AppButton>
      <AppButton $open $gap={4.500}>
        <svg width="32" height="30" viewBox="0 0 32 30">
          <g transform="translate(3 0)">
            <circle cx="13" cy="17" r="12" fill="#fbc116" />
            <path d="M13 17L2.600 11A12 12 0 0 1 23.400 11z" fill="#e33b2e" /><path d="M13 17H23.400A12 12 0 0 0 23.400 11z" fill="#fbc116" />
            <path d="M2.600 11A12 12 0 0 0 12 29l5-9-4-3z" fill="#1f9d4d" />
            <circle cx="13" cy="17" r="6" fill="#fff" /><circle cx="13" cy="17" r="4.700" fill="#3579e8" />
          </g>
          <circle cx="24" cy="9" r="8" fill="#10183d" /><path d="M20 4l4 2 1 7-4 3z" fill="#27468e" /><circle cx="28.500" cy="4" r="1.800" fill="#8fa6cf" />
        </svg>
      </AppButton>
      <Slot $w={13} $gap={406.500} $color="#e3e3e0"><Ico w={13} h={8} sw={1.700}><path d="M1 7l5.500-5.500L12 7" /></Ico></Slot>
      <Slot $w={18} $gap={18}>
        <svg width="18" height="15" viewBox="0 0 18 15"><path d="M3 12q-4-2-1-6 1-1 3-1 3-6 8-3 3 2 2 6l-4 4z" fill="#b4b4b2" /><circle cx="12.500" cy="10" r="5" fill="#d91f2f" /><path d="M10.500 8l4 4M14.500 8l-4 4" stroke="#fff" strokeWidth="1.300" /></svg>
      </Slot>
      <Slot $w={18} $gap={16} $color="#e3e3e0"><Ico w={18} h={14} sw={1.500}><path d="M1 5q8-7.500 16 0M3.500 8q5.500-5 11 0M6 10.800q3-2.600 6 0" /><circle cx="9" cy="12.300" r="1.300" fill="currentColor" stroke="none" /></Ico></Slot>
      <Slot $w={18} $gap={7} $color="#e3e3e0"><Ico w={18} h={15} sw={1.300}><path d="M1 5.200h3L8 1.500v12L4 9.800H1zM10.500 5q2 2.500 0 5M12.800 3q3.500 4.500 0 9M15 1.200q4.500 6.300 0 12.600" /></Ico></Slot>
      <Slot $w={18} $gap={7.500} $color="#e3e3e0"><Ico w={18} h={12} sw={1.500}><rect x="1" y="1" width="13.500" height="10" rx="2" /><path d="M16.500 4v4" /><path d="M3 3h5v6H3z" fill="currentColor" stroke="none" /></Ico></Slot>
      <TaskText $w={64} $gap={9} $align="right" $color="#e6e6e3">12:50 AM<br />2/14/2024</TaskText>
      <Slot $w={15} $gap={9} $color="#e3e3e0"><Ico w={15} h={17} sw={1.400}><path d="M2.500 11.500V6.500a5 5 0 0 1 10 0v5L14 13H1zM5.500 13.500q2 3.500 4 0" /></Ico></Slot>
    </Taskbar>
  );
}

export default function App() {
  return (
    <>
      <Global />
      <Screen>
        <LightBrowser />
        <DarkBrowser />
        <SystemTaskbar />
      </Screen>
    </>
  );
}
